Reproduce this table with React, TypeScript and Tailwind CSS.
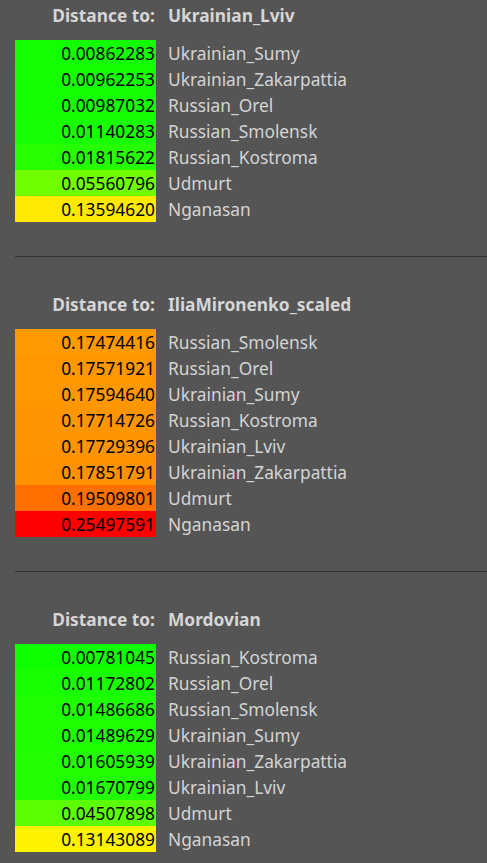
const sections = [
  {
    target: "Ukrainian_Lviv",
    rows: [
      [0.00862283, "Ukrainian_Sumy"],
      [0.00962253, "Ukrainian_Zakarpattia"],
      [0.00987032, "Russian_Orel"],
      [0.01140283, "Russian_Smolensk"],
      [0.01815622, "Russian_Kostroma"],
      [0.05560796, "Udmurt"],
      [0.1359462, "Nganasan"],
    ],
  },
  {
    target: "IliaMironenko_scaled",
    rows: [
      [0.17474416, "Russian_Smolensk"],
      [0.17571921, "Russian_Orel"],
      [0.1759464, "Ukrainian_Sumy"],
      [0.17714726, "Russian_Kostroma"],
      [0.17729396, "Ukrainian_Lviv"],
      [0.17851791, "Ukrainian_Zakarpattia"],
      [0.19509801, "Udmurt"],
      [0.25497591, "Nganasan"],
    ],
  },
  {
    target: "Mordovian",
    rows: [
      [0.00781045, "Russian_Kostroma"],
      [0.01172802, "Russian_Orel"],
      [0.01486686, "Russian_Smolensk"],
      [0.01489629, "Ukrainian_Sumy"],
      [0.01605939, "Ukrainian_Zakarpattia"],
      [0.01670799, "Ukrainian_Lviv"],
      [0.04507898, "Udmurt"],
      [0.13143089, "Nganasan"],
    ],
  },
] as { target: string; rows: [number, string][] }[];

// green -> yellow -> red over 0..0.25
function colorFor(d: number) {
  const hue = Math.max(0, 120 * (1 - d / 0.25));
  return `hsl(${hue}, 100%, 50%)`;
}

function Section({ target, rows }: { target: string; rows: [number, string][] }) {
  return (
    <div>
      <div className="flex h-[26px] items-center font-bold text-[#d6d6d6]">
        <div className="w-[156px] pr-[1px] text-right">Distance to:</div>
        <div className="pl-[12px]">{target}</div>
      </div>
      <div className="mt-[11px] flex flex-col">
        {rows.map(([d, name]) => (
          <div key={name} className="flex h-[26px] items-center">
            <div className="ml-[15px] flex h-full w-[141px] items-center justify-end pr-[1px] pt-[2px] text-black" style={{ background: colorFor(d) }}>
              {d.toFixed(8)}
            </div>
            <div className="pl-[12px] pt-[2px] text-[#d4d4d4]">{name}</div>
          </div>
        ))}
      </div>
    </div>
  );
}

export default function App() {
  return (
    <div className="min-h-[863px] bg-[#555555] pt-[3px] text-[13pt] font-['Noto_Sans',sans-serif]">
      {sections.map((s, i) => (
        <div key={s.target}>
          {i > 0 && <div className="ml-[15px] mt-[34px] mb-[35px] h-px bg-[#333333]" />}
          <Section target={s.target} rows={s.rows} />
        </div>
      ))}
    </div>
  );
}
